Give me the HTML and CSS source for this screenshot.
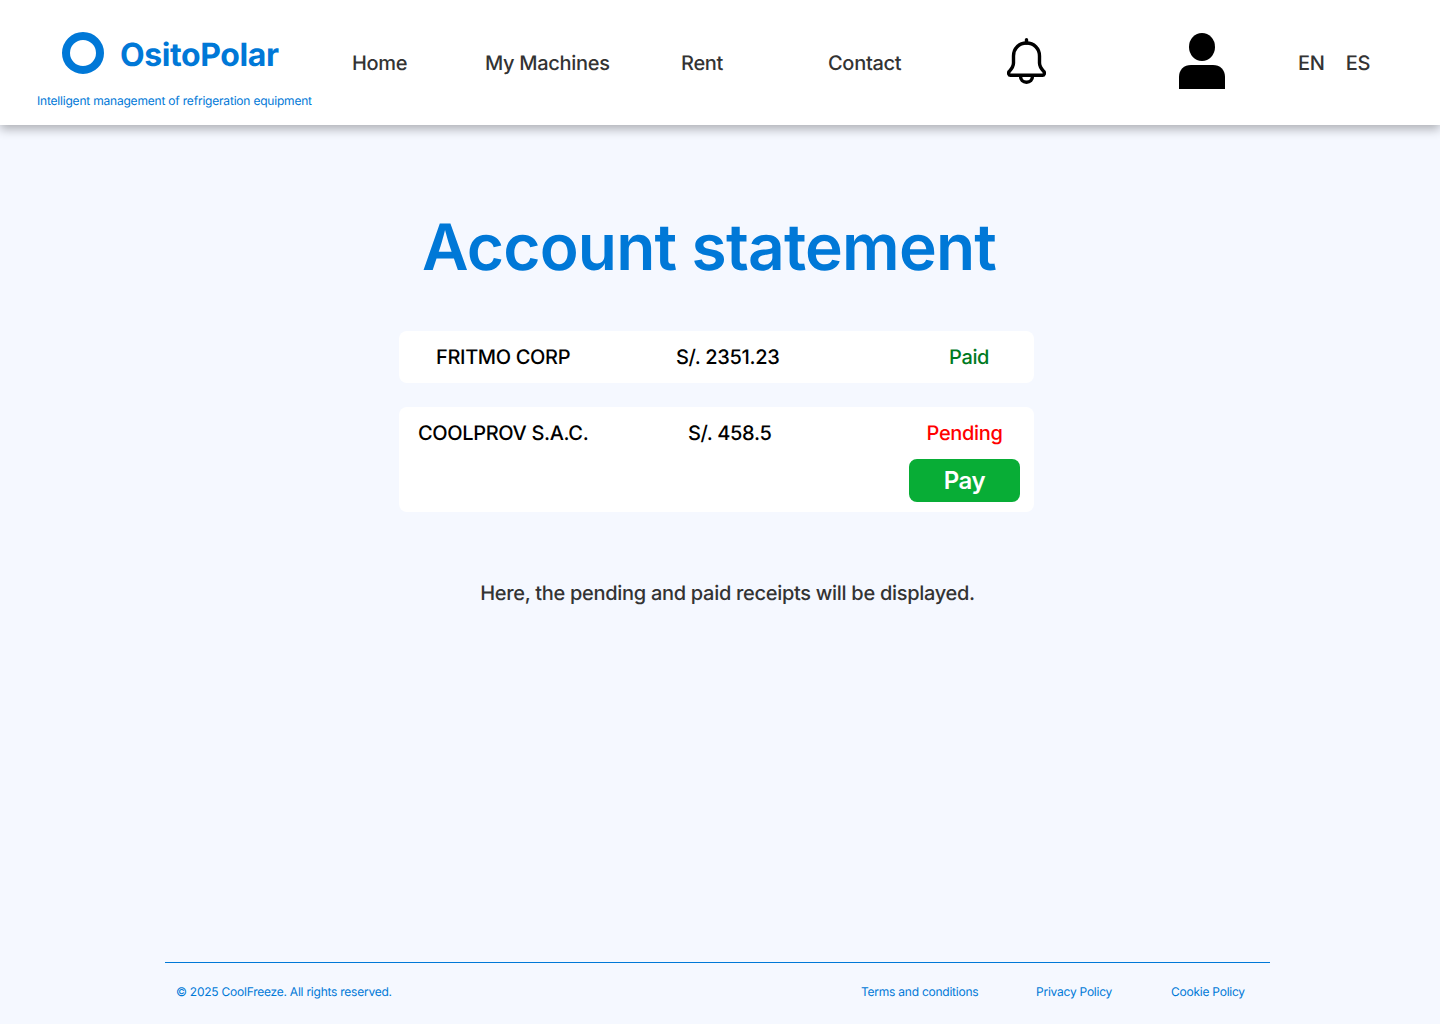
FILE: index.html
```html
<!DOCTYPE html>
<html lang="en">
<head>
    <meta charset="UTF-8">
    <meta name="viewport" content="width=device-width, initial-scale=1.0">
    <title>Account statement</title>
    <link rel="stylesheet" href="styles.css">
</head>
<body>
    <header class="header">
        <div class="brand">
            <div class="brand-top">
                <span class="brand-ring"></span>
                <span class="brand-name">OsitoPolar</span>
            </div>
            <p class="brand-tagline">Intelligent management of refrigeration equipment</p>
        </div>
        <nav class="nav">
            <a class="nav-home" href="#">Home</a>
            <a class="nav-machines" href="#">My Machines</a>
            <a class="nav-rent" href="#">Rent</a>
            <a class="nav-contact" href="#">Contact</a>
        </nav>
        <svg class="bell" width="39" height="46" viewBox="0 0 39 46" fill="none" stroke="#000" stroke-width="3.4" stroke-linejoin="round" stroke-linecap="round">
            <path d="M19.5 1.700V5"/>
            <path d="M19.5 5C12 5 6.500 10.500 6.500 18V25C6.500 29 4 31.500 2.200 33.500C1 34.800 1.700 37.300 3.500 37.300H35.500C37.300 37.300 38 34.800 36.800 33.500C35 31.500 32.500 29 32.500 25V18C32.500 10.500 27 5 19.500 5Z"/>
            <path d="M13.500 38C13.500 42 16 44.300 19.500 44.300C23 44.300 25.500 42 25.500 38"/>
        </svg>
        <svg class="user" width="46" height="56" viewBox="0 0 46 56" fill="#000">
            <ellipse cx="23" cy="14" rx="13" ry="14"/>
            <path d="M0 56V44C0 36.500 5 32 12 32H34C41 32 46 36.500 46 44V56Z"/>
        </svg>
        <div class="langs">
            <a href="#">EN</a>
            <a href="#">ES</a>
        </div>
    </header>

    <main class="main">
        <h1 class="title">Account statement</h1>

        <div class="receipt receipt-paid">
            <span>FRITMO CORP</span>
            <span>S/. 2351.23</span>
            <span class="status-paid">Paid</span>
        </div>

        <div class="receipt receipt-pending">
            <span>COOLPROV S.A.C.</span>
            <span>S/. 458.5</span>
            <div class="pending-col">
                <span class="status-pending">Pending</span>
                <button class="pay-btn" type="button">Pay</button>
            </div>
        </div>

        <p class="note">Here, the pending and paid receipts will be displayed.</p>
    </main>

    <footer class="footer">
        <span class="copyright">© 2025 CoolFreeze. All rights reserved.</span>
        <div class="footer-links">
            <a class="link-terms" href="#">Terms and conditions</a>
            <a class="link-privacy" href="#">Privacy Policy</a>
            <a class="link-cookie" href="#">Cookie Policy</a>
        </div>
    </footer>
</body>
</html>
```

FILE: styles.css
```css
* {
    box-sizing: border-box;
}

body {
    font-family: 'Inter', 'Liberation Sans', sans-serif;
    background-color: #f5f8ff;
    margin: 0;
    min-height: 100vh;
    display: flex;
    flex-direction: column;
    text-rendering: geometricPrecision;
}

a {
    text-decoration: none;
    color: inherit;
}

.header {
    height: 125px;
    background-color: #fff;
    box-shadow: 0 4px 10px rgba(0, 0, 0, 0.3);
    display: flex;
    align-items: flex-start;
    padding-left: 37px;
}

.brand {
    width: 315px;
    padding-top: 32px;
}

.brand-top {
    display: flex;
    align-items: center;
    gap: 16px;
    padding-left: 25px;
}

.brand-ring {
    width: 42px;
    height: 42px;
    border: 8px solid #0078d7;
    border-radius: 50%;
}

.brand-name {
    padding-top: 3px;
    font-size: 32px;
    font-weight: 700;
    color: #0078d7;
    letter-spacing: -0.4px;
}

.brand-tagline {
    margin: 19px 0 0;
    font-size: 12px;
    line-height: 15px;
    color: #0078d7;
    letter-spacing: -0.2px;
}

.nav {
    width: 655px;
    display: flex;
    padding-top: 51px;
    font-size: 20px;
    line-height: 24px;
    font-weight: 545;
    color: #333;
    letter-spacing: -0.3px;
}

.nav-home {
    width: 133px;
}

.nav-machines {
    width: 196px;
}

.nav-rent {
    width: 147px;
}

.bell {
    margin-top: 38px;
}

.user {
    margin-top: 33px;
    margin-left: 133px;
}

.langs {
    display: flex;
    gap: 21px;
    margin-left: 73px;
    padding-top: 51px;
    font-size: 20px;
    line-height: 24px;
    font-weight: 545;
    color: #333;
    letter-spacing: -0.25px;
}

.main {
    flex: 1;
    display: flex;
    flex-direction: column;
    padding: 85px 0 0 399px;
}

.title {
    width: 620px;
    margin: 0 0 45px;
    font-size: 64px;
    line-height: 76px;
    font-weight: 600;
    color: #0078d7;
    text-align: center;
    letter-spacing: -0.82px;
}

.receipt {
    width: 635px;
    background-color: #fff;
    border-radius: 8px;
    display: grid;
    font-size: 20px;
    line-height: 24px;
    font-weight: 545;
    color: #000;
    letter-spacing: -0.35px;
}

.receipt-paid {
    height: 52px;
    align-items: center;
    grid-template-columns: 240px 273px 1fr;
    padding-left: 37px;
    margin-bottom: 24px;
}

.receipt-pending {
    height: 105px;
    grid-template-columns: 270px 221px 111px;
    padding: 14px 0 0 19px;
}

.status-paid {
    color: #007a1f;
}

.pending-col {
    display: flex;
    flex-direction: column;
    align-items: center;
    gap: 14px;
}

.status-pending {
    color: #ff0000;
}

.pay-btn {
    width: 111px;
    height: 43px;
    border: none;
    border-radius: 8px;
    background-color: #08ad36;
    color: #fff;
    font-family: inherit;
    font-size: 24px;
    font-weight: 640;
    letter-spacing: -0.35px;
    cursor: pointer;
}

.note {
    width: 657px;
    margin: 69px 0 0;
    font-size: 20px;
    line-height: 24px;
    font-weight: 545;
    color: #333;
    text-align: center;
    letter-spacing: -0.3px;
}

.footer {
    width: 1105px;
    height: 62px;
    margin-left: 165px;
    border-top: 1px solid #0078d7;
    display: flex;
    padding: 21px 0 0 11px;
    font-size: 12px;
    line-height: 15px;
    color: #0078d7;
    letter-spacing: -0.24px;
}

.copyright {
    width: 685px;
}

.footer-links {
    display: flex;
}

.link-terms {
    width: 175px;
}

.link-privacy {
    width: 135px;
}
```
